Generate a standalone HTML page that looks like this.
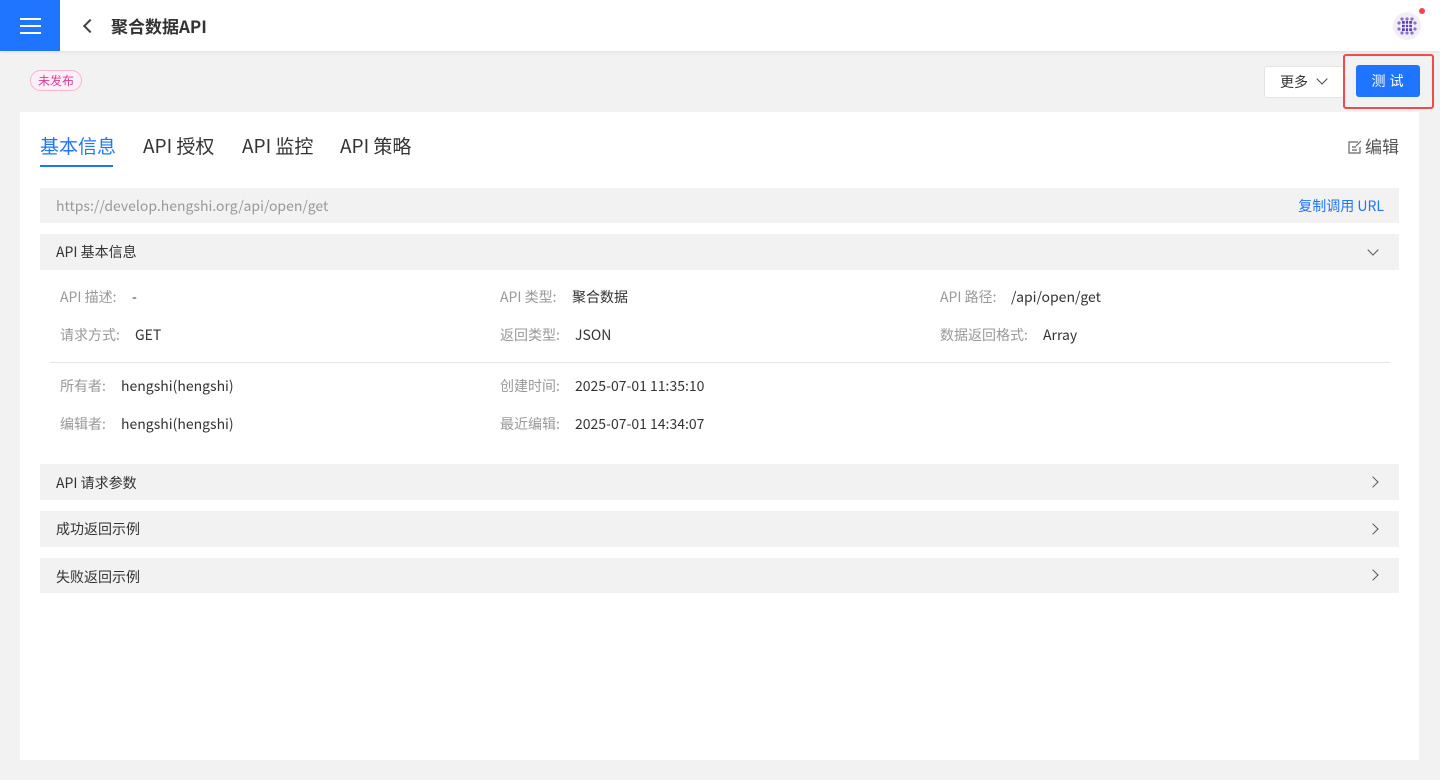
<!DOCTYPE html>
<html><head><meta charset="utf-8"><style>
*{margin:0;padding:0;box-sizing:border-box}
body{width:1440px;height:780px;background:#f2f2f2;font-family:"Noto Sans CJK SC","Liberation Sans",sans-serif;color:#333;position:relative;overflow:hidden}
.abs{position:absolute}
span,div{line-height:1.2}
.hdr{left:0;top:0;width:1440px;height:51px;background:#fff;box-shadow:0 1px 4px rgba(0,0,0,.08)}
.menu{left:0;top:0;width:60px;height:51px;background:#1f75ff}
.menu i{position:absolute;left:20px;width:21px;height:2px;background:#fff}
.card{left:20px;top:112px;width:1399px;height:648px;background:#fff}
.bar{position:absolute;left:20px;width:1359px;background:#f2f2f2;font-size:14px}
.lbl{position:absolute;font-size:14px;color:#999}
.val{position:absolute;font-size:14px;color:#333}
.chev{position:absolute;right:22px;width:8px;height:8px;border-right:1.5px solid #555;border-bottom:1.5px solid #555}
</style></head><body>
<div class="abs hdr"></div>
<div class="abs menu"><i style="top:18px"></i><i style="top:25px"></i><i style="top:32px"></i></div>
<div class="abs" style="left:85px;top:21px;width:10px;height:10px;border-left:2px solid #444;border-bottom:2px solid #444;transform:rotate(45deg)"></div>
<div class="abs" style="left:111px;top:16px;font-size:17px;font-weight:bold;color:#333">聚合数据API</div>
<div class="abs" style="left:1393px;top:12px;width:28px;height:28px;border-radius:50%;background:#f2eef8">
<svg width="28" height="28" viewBox="0 0 28 28"><g fill="#8a6fd0"><circle cx="9" cy="7" r="1.6"/><circle cx="14" cy="7" r="1.6"/><circle cx="19" cy="7" r="1.6"/><circle cx="6" cy="11" r="1.6"/><circle cx="22" cy="11" r="1.6"/><circle cx="6" cy="17" r="1.6"/><circle cx="22" cy="17" r="1.6"/><circle cx="9" cy="21" r="1.6"/><circle cx="14" cy="21" r="1.6"/><circle cx="19" cy="21" r="1.6"/></g><rect x="9" y="9" width="10" height="10" fill="#5a3fb0"/><path d="M12.3 9v10M15.7 9v10M9 12.3h10M9 15.7h10" stroke="#fff" stroke-width="1"/></svg></div>
<div class="abs" style="left:1419px;top:8px;width:6px;height:6px;border-radius:50%;background:#f5454f"></div>
<div class="abs" style="left:30px;top:70px;width:52px;height:21px;border:1px solid #f7b3d6;border-radius:11px;background:#fff0f7;color:#d63c95;font-size:12px;line-height:19px;text-align:center">未发布</div>
<div class="abs" style="left:1264px;top:66px;width:80px;height:32px;border:1px solid #e4e4e4;border-radius:3px;background:#fff;font-size:14px;line-height:30px;padding-left:15px">更多</div>
<div class="abs" style="left:1318px;top:75px;width:8px;height:8px;border-right:1.5px solid #444;border-bottom:1.5px solid #444;transform:rotate(45deg)"></div>
<div class="abs" style="left:1356px;top:65px;width:64px;height:32px;background:#1f75ff;border-radius:3px;color:#fff;font-size:14px;line-height:32px;text-align:center;letter-spacing:4px;padding-left:3px">测试</div>
<div class="abs" style="left:1343px;top:54px;width:91px;height:55px;border:2px solid #f04a4a;border-radius:3px"></div>
<div class="abs card">
<div class="abs" style="left:20px;top:23px;font-size:19px;color:#1f75ff">基本信息</div>
<div class="abs" style="left:20px;top:53px;width:73px;height:2px;background:#1f75ff"></div>
<div class="abs" style="left:123px;top:23px;font-size:19px">API 授权</div>
<div class="abs" style="left:222px;top:23px;font-size:19px">API 监控</div>
<div class="abs" style="left:320px;top:23px;font-size:19px">API 策略</div>
<svg class="abs" style="left:1327px;top:28px" width="15" height="15" viewBox="0 0 15 15"><path d="M11 2H2v11h11V7M5 7h4M5 10h5M9 6l5-5" fill="none" stroke="#666" stroke-width="1.2"/></svg>
<div class="abs" style="left:1345px;top:24px;font-size:17px;color:#555">编辑</div>
<div class="bar" style="top:76px;height:35px"><span class="abs" style="left:16px;top:10px;color:#999">https://develop.hengshi.org/api/open/get</span><span class="abs" style="right:15px;top:10px;color:#1f75ff">复制调用 URL</span></div>
<div class="bar" style="top:122px;height:36px"><span class="abs" style="left:16px;top:10px;color:#333">API 基本信息</span><div class="chev" style="top:12px;transform:rotate(45deg)"></div></div>
<span class="lbl" style="left:40px;top:177px">API 描述:</span><span class="val" style="left:112px;top:177px">-</span>
<span class="lbl" style="left:480px;top:177px">API 类型:</span><span class="val" style="left:552px;top:177px">聚合数据</span>
<span class="lbl" style="left:920px;top:177px">API 路径:</span><span class="val" style="left:991px;top:177px">/api/open/get</span>
<span class="lbl" style="left:40px;top:215px">请求方式:</span><span class="val" style="left:115px;top:215px">GET</span>
<span class="lbl" style="left:480px;top:215px">返回类型:</span><span class="val" style="left:555px;top:215px">JSON</span>
<span class="lbl" style="left:920px;top:215px">数据返回格式:</span><span class="val" style="left:1023px;top:215px">Array</span>
<div class="abs" style="left:30px;top:250px;width:1340px;height:1px;background:#e4e4e4"></div>
<span class="lbl" style="left:40px;top:266px">所有者:</span><span class="val" style="left:101px;top:266px">hengshi(hengshi)</span>
<span class="lbl" style="left:480px;top:266px">创建时间:</span><span class="val" style="left:555px;top:266px">2025-07-01 11:35:10</span>
<span class="lbl" style="left:40px;top:304px">编辑者:</span><span class="val" style="left:101px;top:304px">hengshi(hengshi)</span>
<span class="lbl" style="left:480px;top:304px">最近编辑:</span><span class="val" style="left:555px;top:304px">2025-07-01 14:34:07</span>
<div class="bar" style="top:352px;height:36px"><span class="abs" style="left:16px;top:11px">API 请求参数</span><div class="chev" style="top:14px;transform:rotate(-45deg)"></div></div>
<div class="bar" style="top:399px;height:36px"><span class="abs" style="left:16px;top:10px">成功返回示例</span><div class="chev" style="top:14px;transform:rotate(-45deg)"></div></div>
<div class="bar" style="top:446px;height:35px"><span class="abs" style="left:16px;top:11px">失败返回示例</span><div class="chev" style="top:13px;transform:rotate(-45deg)"></div></div>
</div>
</body></html>
